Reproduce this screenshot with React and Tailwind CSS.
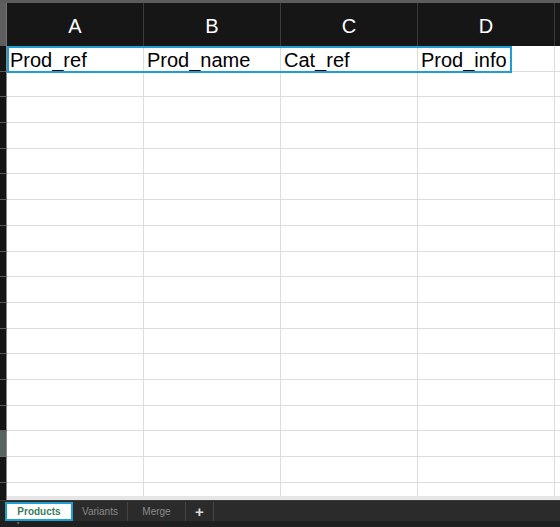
import React from "react";

const columns = ["A", "B", "C", "D"];
const firstRow = ["Prod_ref", "Prod_name", "Cat_ref", "Prod_info"];
const rowCount = 18;
const tabs = ["Products", "Variants", "Merge"];

export default function App() {
    const rows = Array.from({ length: rowCount }, (_, i) => i);

    return (
        <div className="w-[560px] h-[527px] bg-[#1c1c1c] flex flex-col overflow-hidden font-['Liberation_Sans',Arial,sans-serif]">
            {/* top edge */}
            <div className="h-[3px] bg-[#5c5c5c] shrink-0" />

            {/* column header */}
            <div className="flex h-[43px] shrink-0 bg-[#161616]">
                <div className="w-[7px] shrink-0 bg-[#5e5e5e] border-r border-[#777]" />
                {columns.map((c) => (
                    <div
                        key={c}
                        className="w-[137px] shrink-0 border-r border-[#3c3c3c] flex items-center justify-center text-white text-[20px] pt-[2px]"
                    >
                        {c}
                    </div>
                ))}
                <div className="flex-1" />
            </div>

            {/* grid body */}
            <div className="relative h-[454px] shrink-0 overflow-hidden bg-white">
                {rows.map((r) => (
                    <div key={r} className="flex h-[25.7px]">
                        <div
                            className={
                                r === 15
                                    ? "w-[7px] shrink-0 bg-[#56655d] border-r border-[#888] border-b border-b-[#6a6a6a]"
                                    : "w-[7px] shrink-0 bg-[#151515] border-r border-[#888] border-b border-b-[#5a5a5a]"
                            }
                        />
                        {columns.map((c, ci) => (
                            <div
                                key={c}
                                className="w-[137px] shrink-0 border-r border-b border-[#dcdcdc] pt-[4px] pl-[3px] text-black text-[20px] leading-none whitespace-nowrap"
                            >
                                {r === 0 ? firstRow[ci] : ""}
                            </div>
                        ))}
                        <div className="flex-1 border-b border-[#dcdcdc]" />
                    </div>
                ))}

                {/* selection */}
                <div className="absolute left-[7px] top-0 w-[505px] h-[27px] border-2 border-[#1f9fcf] pointer-events-none" />

                {/* horizontal scrollbar track */}
                <div className="absolute left-[7px] right-0 bottom-0 h-[4px] bg-[#e6e6e6]" />
            </div>

            {/* sheet tabs */}
            <div className="flex items-end h-[21px] shrink-0 bg-[#2b2b2b] border-t border-[#3a3a3a]">
                <div className="w-[5px] h-full bg-[#222]" />
                {tabs.map((t, i) =>
                    i === 0 ? (
                        <div
                            key={t}
                            className="w-[68px] h-[19px] bg-white border-2 border-[#1f9fcf] flex items-center justify-center text-[10px] font-bold text-[#3a7d5c]"
                        >
                            {t}
                        </div>
                    ) : (
                        <div
                            key={t}
                            className={
                                i === 1
                                    ? "w-[55px] h-[19px] border-r border-[#444] flex items-center justify-center text-[10px] text-[#8a8a8a]"
                                    : "w-[58px] h-[19px] border-r border-[#444] flex items-center justify-center text-[10px] text-[#8a8a8a]"
                            }
                        >
                            {t}
                        </div>
                    )
                )}
                <div className="w-[28px] h-[19px] border-r border-[#444] flex items-center justify-center text-[15px] font-bold text-[#dcdcdc] leading-none">
                    +
                </div>
            </div>

            {/* status strip */}
            <div className="flex-1 bg-[#1f1f1f] relative">
                <span className="absolute left-[17px] top-0 text-[6px] leading-none text-[#ccc]">°</span>
            </div>
        </div>
    );
}
